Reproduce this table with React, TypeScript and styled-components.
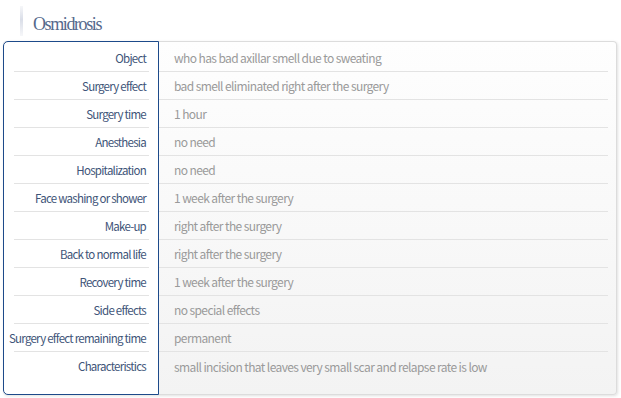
import React from "react";
import styled, { createGlobalStyle } from "styled-components";

const GlobalStyle = createGlobalStyle`
  html, body {
    margin: 0;
    padding: 0;
    background: #ffffff;
  }
`;

const Page = styled.div`
  width: 621px;
  height: 398px;
  padding: 6px 0 0 3px;
  box-sizing: border-box;
  font-family: "Noto Sans CJK JP", "Liberation Sans", sans-serif;
`;

const Heading = styled.h2`
  margin: 0 0 5px 17px;
  height: 30px;
  display: flex;
  align-items: center;
  gap: 10px;
  font-family: "Liberation Serif", serif;
  font-weight: normal;
  font-size: 18px;
  letter-spacing: -1.4px;
  padding-top: 6px;
  box-sizing: border-box;
  color: #55698c;
`;

const HeadingBar = styled.span`
  width: 3px;
  height: 30px;
  margin-top: -6px;
  background: linear-gradient(to bottom, #f6f7f9, #dadee8 45%, #f6f7f9);
`;

const Card = styled.div`
  width: 614px;
  display: flex;
  border: 1px solid #dcdcdc;
  border-left: none;
  border-radius: 4px;
  box-shadow: 1px 1px 3px rgba(0, 0, 0, 0.12);
  background: linear-gradient(to bottom, #fefefe, #f3f3f3);
  box-sizing: border-box;
`;

const LabelColumn = styled.div`
  width: 156px;
  margin: -1px 0;
  box-sizing: border-box;
  background: #ffffff;
  border: 1px solid #1d4a8a;
  border-radius: 5px 0 0 5px;
  padding: 2px 9px 14px 10px;
`;

const ValueColumn = styled.div`
  flex: 1;
  padding: 2px 8px 14px 0;
`;

const Cell = styled.div<{ $align: "left" | "right" }>`
  height: 28px;
  box-sizing: border-box;
  display: flex;
  align-items: center;
  justify-content: ${(p) => (p.$align === "right" ? "flex-end" : "flex-start")};
  padding: ${(p) => (p.$align === "right" ? "0 3px 0 0" : "0 0 0 15px")};
  font-size: ${(p) => (p.$align === "right" ? "11.5px" : "12px")};
  letter-spacing: ${(p) => (p.$align === "right" ? "-0.75px" : "-0.6px")};
  white-space: nowrap;
  color: ${(p) => (p.$align === "right" ? "#3e5478" : "#9a9a9a")};
  border-bottom: 1px solid #e3e3e3;
  &:last-child {
    border-bottom: none;
  }
`;

const rows: [string, string][] = [
  ["Object", "who has bad axillar smell due to sweating"],
  ["Surgery effect", "bad smell eliminated right after the surgery"],
  ["Surgery time", "1 hour"],
  ["Anesthesia", "no need"],
  ["Hospitalization", "no need"],
  ["Face washing or shower", "1 week after the surgery"],
  ["Make-up", "right after the surgery"],
  ["Back to normal life", "right after the surgery"],
  ["Recovery time", "1 week after the surgery"],
  ["Side effects", "no special effects"],
  ["Surgery effect remaining time", "permanent"],
  ["Characteristics", "small incision that leaves very small scar and relapse rate is low"],
];

export default function App() {
  return (
    <>
      <GlobalStyle />
      <Page>
        <Heading>
          <HeadingBar />
          Osmidrosis
        </Heading>
        <Card>
          <LabelColumn>
            {rows.map(([label]) => (
              <Cell key={label} $align="right">
                {label}
              </Cell>
            ))}
          </LabelColumn>
          <ValueColumn>
            {rows.map(([label, value]) => (
              <Cell key={label} $align="left">
                {value}
              </Cell>
            ))}
          </ValueColumn>
        </Card>
      </Page>
    </>
  );
}
